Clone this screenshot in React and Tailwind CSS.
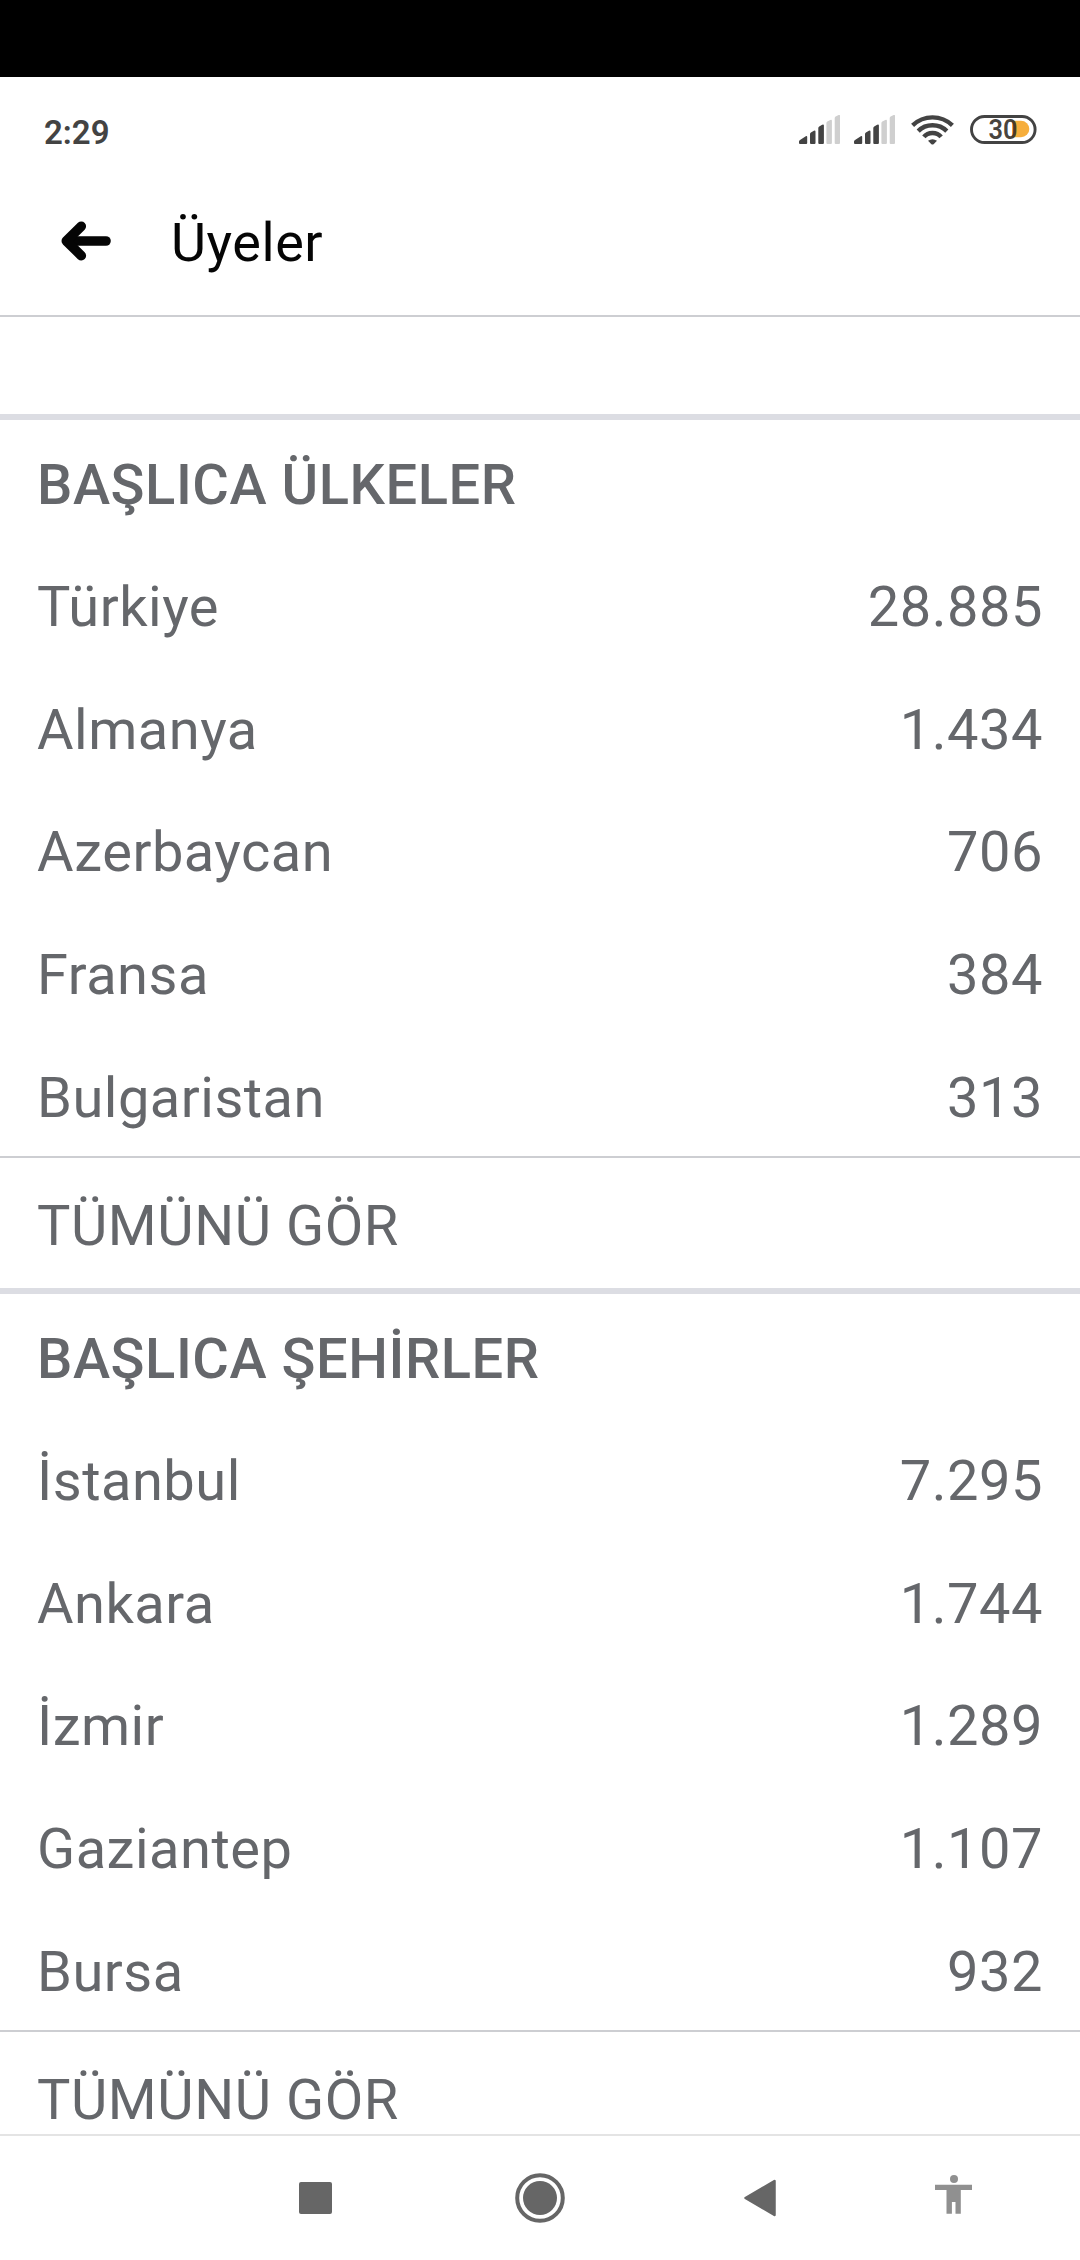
const sections = [
    {
        title: 'BAŞLICA ÜLKELER',
        rows: [
            { name: 'Türkiye', count: '28.885' },
            { name: 'Almanya', count: '1.434' },
            { name: 'Azerbaycan', count: '706' },
            { name: 'Fransa', count: '384' },
            { name: 'Bulgaristan', count: '313' },
        ],
    },
    {
        title: 'BAŞLICA ŞEHİRLER',
        rows: [
            { name: 'İstanbul', count: '7.295' },
            { name: 'Ankara', count: '1.744' },
            { name: 'İzmir', count: '1.289' },
            { name: 'Gaziantep', count: '1.107' },
            { name: 'Bursa', count: '932' },
        ],
    },
];

const SignalIcon = () => (
    <svg width="41" height="30" viewBox="0 0 41 30">
        <g fill="#434343">
            <path d="M0 28v-1.500q0-1 1-1.600L6.800 21.200q1.400-.6 1.400.7V28q0 1-1 1H1q-1 0-1-1z" />
            <path d="M11 28v-9q0-1 .9-1.5l3-1.700q1.600-.6 1.600.8V28q0 1-1 1h-3.500q-1 0-1-1z" />
            <path d="M19.300 28V13q0-1 .9-1.500l3-1.700q1.700-.6 1.700.8V28q0 1-1 1h-3.600q-1 0-1-1z" />
        </g>
        <g fill="#cfcfcf">
            <path d="M27.400 28V8q0-1 .9-1.500l3-1.500q1.600-.6 1.600.8V28q0 1-1 1h-3.500q-1 0-1-1z" />
            <path d="M35.700 28V3q0-1 .9-1.500l3-1.500Q41-.3 41 .8V28q0 1-1 1h-3.300q-1 0-1-1z" />
        </g>
    </svg>
);

const WifiIcon = () => (
    <svg width="43" height="30" viewBox="0 0 43 30" fill="none" stroke="#434343" strokeWidth="4.400">
        <path d="M1.600 10.400Q10 2.400 21.500 2.400t19.900 8" />
        <path d="M7.200 16.100Q13 10.300 21.500 10.300T35.800 16.100" />
        <path d="M12.900 21.900Q16 18 21.500 18t8.600 3.900" />
        <path d="M17 25.800q4.500-3.200 9 0l-3.200 3.200q-1.300 1.200-2.600 0z" fill="#434343" stroke="none" />
    </svg>
);

const BatteryIcon = () => (
    <svg width="67" height="30" viewBox="0 0 67 30">
        <path d="M42 5.700H51A8.300 8.300 0 0 1 51 22.300H42z" fill="#f6ae3c" />
        <rect x="1.500" y="1.500" width="63.600" height="26" rx="13" fill="none" stroke="#434343" strokeWidth="2.900" />
        <text x="18.600" y="23.800" textLength="29" lengthAdjust="spacingAndGlyphs" fontFamily="Roboto, sans-serif" fontSize="27" fontWeight="600" fill="#2f2a24" fillOpacity=".88">30</text>
    </svg>
);

const StatusBar = () => (
    <div className="flex h-[93px] shrink-0 items-center justify-between pt-[17px] pl-11 pr-[43px]">
        <span className="text-[33px] leading-none font-semibold text-[#434343]">2:29</span>
        <div className="flex items-center pb-[4px]">
            <SignalIcon />
            <div className="ml-[14px]"><SignalIcon /></div>
            <div className="ml-4"><WifiIcon /></div>
            <div className="ml-4"><BatteryIcon /></div>
        </div>
    </div>
);

const Header = () => (
    <header className="flex h-[147px] shrink-0 items-center border-b-2 border-[#cdced2] pl-[61px]">
        <svg width="50" height="40" viewBox="0 0 50 40" className="mb-[4px]" fill="none" stroke="#050505" strokeWidth="9.600" strokeLinecap="round" strokeLinejoin="round">
            <path d="M45 20H7" />
            <path d="M20.300 5.300L5.300 20l15 14.700" />
        </svg>
        <h1 className="ml-[60px] text-[54px] leading-none tracking-[0.01em] text-[#050505]">Üyeler</h1>
    </header>
);

const Section = ({ title, rows }) => (
    <section className="border-t-[6px] border-[#dcdde3] text-[56px] leading-none tracking-[0.5px] text-[#65676b]">
        <div className="grid h-[736px] grid-rows-6 px-[37px]">
            <h2 className="flex items-center pt-2 font-medium tracking-[0.01em]">{title}</h2>
            {rows.map(row => (
                <div key={row.name} className="flex items-center justify-between pt-1.5">
                    <span>{row.name}</span>
                    <span>{row.count}</span>
                </div>
            ))}
        </div>
        <button className="flex h-[132px] w-full items-center border-t-2 border-[#cdced2] px-[37px] pt-1.5 tracking-[0.01em]">TÜMÜNÜ GÖR</button>
    </section>
);

const NavBar = () => (
    <nav className="flex h-[126px] shrink-0 items-center border-t-2 border-[#e4e4e4] bg-white pl-[299px]">
        <div className="h-8 w-[33px] rounded-[2px] bg-[#666666]" />
        <svg width="50" height="50" viewBox="0 0 50 50" className="ml-[183px]">
            <circle cx="25" cy="25" r="22.800" fill="none" stroke="#666666" strokeWidth="4" />
            <circle cx="25" cy="25" r="17" fill="#666666" />
        </svg>
        <svg width="32" height="38" viewBox="0 0 32 38" className="ml-[179px]">
            <path d="M1.500 19L30.500 2v34z" fill="#666666" stroke="#666666" strokeWidth="2.500" strokeLinejoin="round" />
        </svg>
        <svg width="37" height="39" viewBox="0 0 37 39" className="mb-[8px] ml-[159px]" fill="#909090">
            <circle cx="19" cy="4" r="4" />
            <path d="M0 9.700h37v5.300H25.800v23.700h-5.300V27h-3.600v11.700h-5.400V15H0z" />
        </svg>
    </nav>
);

export default function App() {
    return (
        <div className="flex h-[2260px] w-[1080px] flex-col overflow-hidden bg-white font-['Roboto',sans-serif]">
            <div className="h-[77px] shrink-0 bg-black" />
            <StatusBar />
            <Header />
            <main className="min-h-0 flex-1 overflow-hidden pt-[97px]">
                {sections.map(section => (
                    <Section key={section.title} title={section.title} rows={section.rows} />
                ))}
            </main>
            <NavBar />
        </div>
    );
}
